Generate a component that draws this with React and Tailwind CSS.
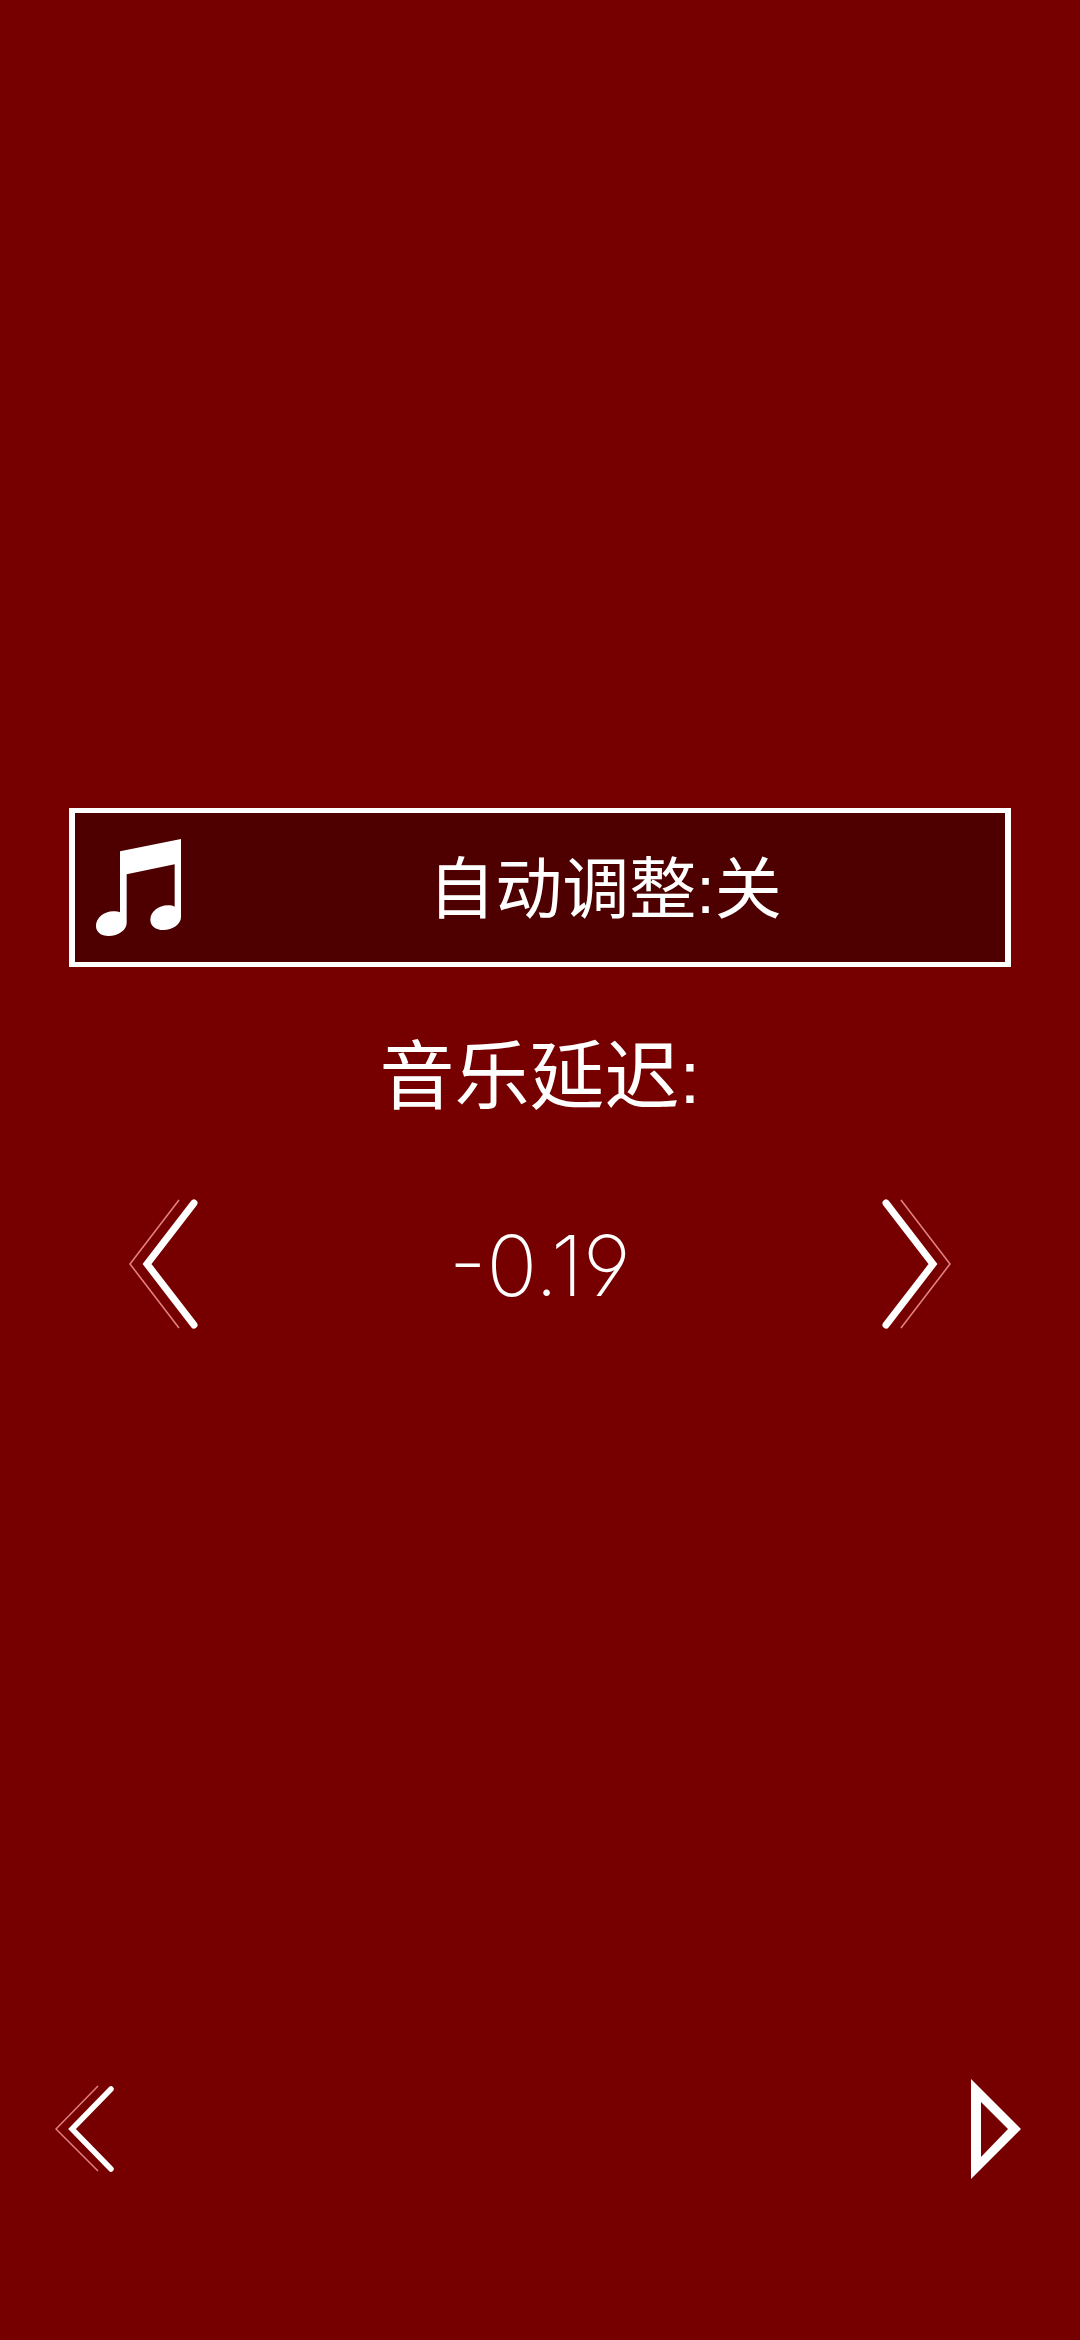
import { useState } from 'react'

function MusicIcon() {
  return (
    <svg className="w-[85px] h-[97px] shrink-0" viewBox="108 118 255 291" fill="#fff" aria-hidden="true">
      <path d="M180 155 L363 118 V352 C363 374 338 391 310 391 C287 391 271 378 271 360 C271 337 295 317 324 317 C332 317 339 318 344 321 V194 L200 224 V370 C200 391 175 409 146 409 C123 409 108 397 108 379 C108 355 132 335 160 335 C168 335 175 336 180 338 Z" />
    </svg>
  )
}

function DoubleChevron({ className }) {
  return (
    <svg className={className} viewBox="0 0 70 130" fill="none" stroke="#fff" aria-hidden="true">
      <path d="M50 1 L1 65 L50 129" stroke="#e08080" strokeWidth="1.6" />
      <path d="M65 4 L18 65 L65 126" strokeWidth="7" strokeLinecap="round" />
    </svg>
  )
}

function BackIcon() {
  return (
    <svg className="w-[60px] h-[88px]" viewBox="0 0 60 88" fill="none" stroke="#fff" aria-hidden="true">
      <path d="M43 1 L1 44 L43 86" stroke="#e08080" strokeWidth="1.5" />
      <path d="M56 4 L17 44 L56 84" strokeWidth="5.5" strokeLinecap="round" />
    </svg>
  )
}

function PlayIcon() {
  return (
    <svg className="w-[50px] h-[100px]" viewBox="0 0 50 100" fill="#fff" fillRule="evenodd" aria-hidden="true">
      <path d="M0 0 L50 50 L0 100 Z M10 23 V78 L37 50 Z" />
    </svg>
  )
}

export default function App() {
  const [auto, setAuto] = useState(false)
  const [delay, setDelay] = useState(-19)

  return (
    <div className="min-h-screen flex flex-col bg-[#760000] text-white font-['Liberation_Sans','Noto_Sans_CJK_SC',sans-serif]">
      <main className="flex-1 flex flex-col justify-center px-[69px] pt-[58px]">
        <button
          type="button"
          aria-pressed={auto}
          onClick={() => setAuto(!auto)}
          className="flex items-center gap-6 h-[159px] pl-[21px] bg-[#4e0000] border-x-6 border-y-5 border-white"
        >
          <MusicIcon />
          <span className="flex-1 pt-1 text-center text-[67px] leading-[96px]">自动调整:{auto ? '开' : '关'}</span>
        </button>

        <h1 className="mt-[62px] text-center text-[75px] leading-[96px]">音乐延迟:</h1>

        <div className="mt-[74px] px-[60px] flex items-center justify-between">
          <button type="button" aria-label="-" onClick={() => setDelay(delay - 1)}>
            <DoubleChevron className="w-[70px] h-[130px]" />
          </button>
          <output className="pt-1 font-['Inter',sans-serif] font-extralight text-[84px] leading-[96px] [font-feature-settings:'ss01']">
            {(delay / 100).toFixed(2)}
          </output>
          <button type="button" aria-label="+" onClick={() => setDelay(delay + 1)}>
            <DoubleChevron className="w-[70px] h-[130px] rotate-180" />
          </button>
        </div>
      </main>

      <footer className="flex items-center justify-between pl-[55px] pr-[59px] pb-[161px]">
        <button type="button" aria-label="返回">
          <BackIcon />
        </button>
        <button type="button" aria-label="播放">
          <PlayIcon />
        </button>
      </footer>
    </div>
  )
}
